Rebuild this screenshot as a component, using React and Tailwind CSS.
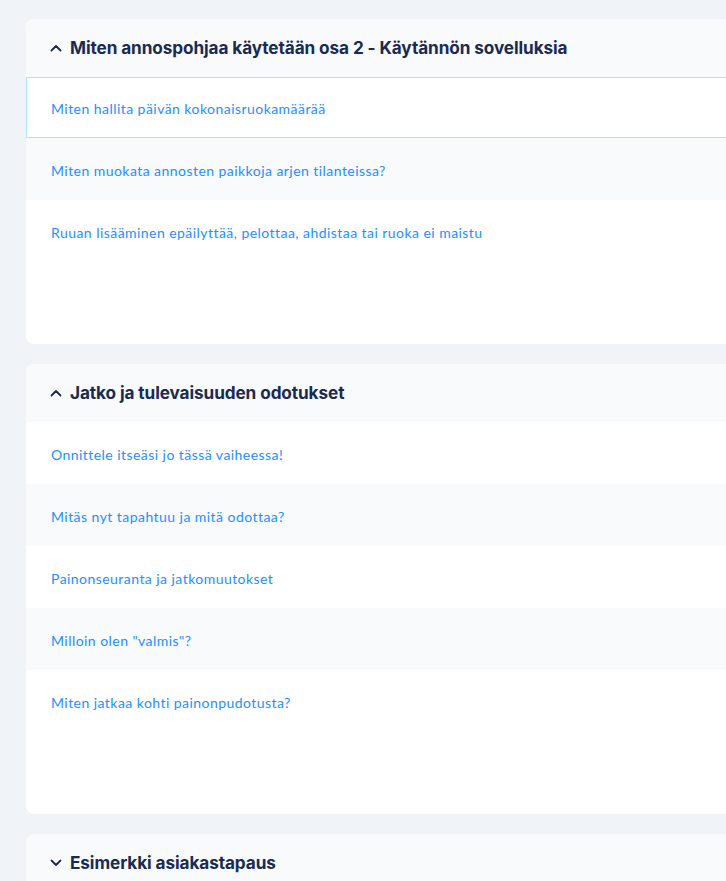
import React from "react";

const Chevron = ({ up }) => (
  <svg width="12" height="8" viewBox="0 0 12 8" fill="none" className="shrink-0">
    {up ? (
      <path d="M1.5 6.5 L6 2 L10.5 6.5" stroke="#1b2a4e" strokeWidth="1.8" strokeLinecap="round" strokeLinejoin="round" />
    ) : (
      <path d="M1.5 1.5 L6 6 L10.5 1.5" stroke="#1b2a4e" strokeWidth="1.8" strokeLinecap="round" strokeLinejoin="round" />
    )}
  </svg>
);

const itemFont = { fontFamily: "Lato, 'Noto Sans', sans-serif" };

const Item = ({ text, gray, active, last }) => (
  <div
    className={
      "flex items-start " +
      (last ? "h-[144px] pt-[24px] pl-[25px] " : active ? "h-[61px] pt-[22px] pl-[24px] border border-[#b3e3fa] " : "h-[62px] pt-[24px] pl-[25px] ") +
      (gray ? "bg-[#f8fafc] " : "bg-white ")
    }
  >
    <span className="text-[14px] tracking-[0.45px] text-[#1e90ff] leading-[18px]" style={itemFont}>
      {text}
    </span>
  </div>
);

const Header = ({ title, up }) => (
  <div className="flex items-center h-[58px] bg-[#f8fafc] pl-[24px] gap-[8px]">
    <Chevron up={up} />
    <span
      className="text-[17.2px] font-bold text-[#1a2b52] tracking-[-0.1px]"
      style={{ fontFamily: "Inter, 'Noto Sans', sans-serif" }}
    >
      {title}
    </span>
  </div>
);

export default function App() {
  return (
    <div className="w-[726px] h-[881px] overflow-hidden bg-[#f0f4f8] pt-[19px] pl-[26px]">
      <div className="w-[760px] flex flex-col gap-[20px]">
        <div className="rounded-[8px] overflow-hidden bg-white">
          <Header title="Miten annospohjaa käytetään osa 2 - Käytännön sovelluksia" up />
          <Item text="Miten hallita päivän kokonaisruokamäärää" active />
          <Item text="Miten muokata annosten paikkoja arjen tilanteissa?" gray />
          <Item text="Ruuan lisääminen epäilyttää, pelottaa, ahdistaa tai ruoka ei maistu" last />
        </div>
        <div className="rounded-[8px] overflow-hidden bg-white">
          <Header title="Jatko ja tulevaisuuden odotukset" up />
          <Item text="Onnittele itseäsi jo tässä vaiheessa!" />
          <Item text="Mitäs nyt tapahtuu ja mitä odottaa?" gray />
          <Item text="Painonseuranta ja jatkomuutokset" />
          <Item text='Milloin olen "valmis"?' gray />
          <Item text="Miten jatkaa kohti painonpudotusta?" last />
        </div>
        <div className="rounded-[8px] overflow-hidden bg-white">
          <Header title="Esimerkki asiakastapaus" />
        </div>
      </div>
    </div>
  );
}
